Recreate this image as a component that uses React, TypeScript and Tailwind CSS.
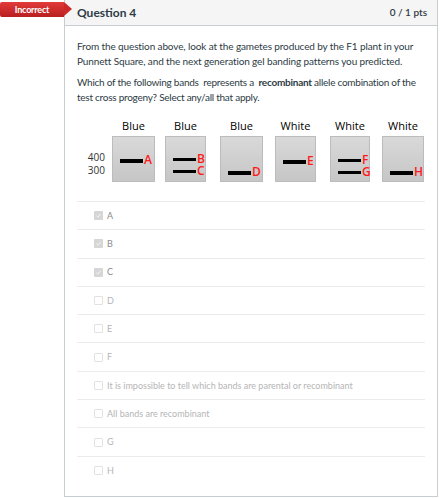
import React from "react";

const options = [
  { label: "A", checked: true },
  { label: "B", checked: true },
  { label: "C", checked: true },
  { label: "D", checked: false },
  { label: "E", checked: false },
  { label: "F", checked: false },
  { label: "It is impossible to tell which bands are parental or recombinant", checked: false },
  { label: "All bands are recombinant", checked: false },
  { label: "G", checked: false },
  { label: "H", checked: false },
];

type Band = { top: number; thick: boolean; letter: string };

const lanes: { name: string; ml: string; w: string; bands: Band[] }[] = [
  { name: "Blue", ml: "ml-0", w: "w-[43px]", bands: [{ top: 22, thick: true, letter: "A" }] },
  {
    name: "Blue",
    ml: "ml-[10px]",
    w: "w-[41px]",
    bands: [
      { top: 21, thick: false, letter: "B" },
      { top: 33, thick: false, letter: "C" },
    ],
  },
  { name: "Blue", ml: "ml-[14px]", w: "w-[43px]", bands: [{ top: 34, thick: true, letter: "D" }] },
  { name: "White", ml: "ml-[12px]", w: "w-[41px]", bands: [{ top: 23, thick: true, letter: "E" }] },
  {
    name: "White",
    ml: "ml-[14px]",
    w: "w-[40px]",
    bands: [
      { top: 22, thick: false, letter: "F" },
      { top: 34, thick: false, letter: "G" },
    ],
  },
  { name: "White", ml: "ml-[12px]", w: "w-[42px]", bands: [{ top: 34, thick: true, letter: "H" }] },
];

function GelFigure() {
  return (
    <div className="flex items-end mt-[14px] pl-[7px]" style={{ fontFamily: "'Open Sans', 'Liberation Sans', sans-serif" }}>
      <div className="flex flex-col items-end w-[21px] mr-[7px] mb-[5px] text-[10px] leading-[13px] text-[#333]">
        <span>400</span>
        <span>300</span>
      </div>
      {lanes.map((lane, i) => (
        <div key={i} className={`flex flex-col items-center ${lane.ml}`}>
          <span className="text-[11px] leading-[14px] text-black mb-[3px]">{lane.name}</span>
          <div className={`relative h-[46px] ${lane.w} bg-gradient-to-b from-[#d9d9d9] to-[#c6c6c6] border border-[#bcbcbc]`}>
            {lane.bands.map((b) => (
              <React.Fragment key={b.letter}>
                <div
                  className={`absolute left-[7px] w-[23px] bg-black ${b.thick ? "h-[4px]" : "h-[3px]"}`}
                  style={{ top: b.top }}
                />
                <span
                  className="absolute left-[31px] text-[12px] leading-[12px] text-[#ff1a1a] font-semibold"
                  style={{ top: b.top - 5 }}
                >
                  {b.letter}
                </span>
              </React.Fragment>
            ))}
          </div>
        </div>
      ))}
    </div>
  );
}

function Checkbox({ checked }: { checked: boolean }) {
  if (checked) {
    return (
      <span className="flex items-center justify-center w-[9px] h-[9px] rounded-[1px] bg-[#d6d6d6]">
        <svg viewBox="0 0 10 10" className="w-[7px] h-[7px]">
          <path d="M2 5.2 L4.2 7.3 L8 2.8" fill="none" stroke="#f5f5f5" strokeWidth="1.4" />
        </svg>
      </span>
    );
  }
  return <span className="block w-[9px] h-[9px] rounded-[1px] border border-[#e2e2e2] bg-white" />;
}

export default function App() {
  return (
    <div className="relative w-[441px] h-[498px] bg-white" style={{ fontFamily: "Lato, 'Open Sans', sans-serif" }}>
      <div className="absolute left-0 top-[2px] z-10 flex">
        <div className="h-[15px] w-[64px] bg-gradient-to-b from-[#e23b3b] to-[#b91f1f] rounded-l-[2px] flex items-center justify-center text-white text-[9px] font-bold tracking-[-0.2px]">
          Incorrect
        </div>
        <div className="w-0 h-0 border-y-[7.5px] border-y-transparent border-l-[8px] border-l-[#cc2a2a]" />
      </div>

      <div className="absolute left-[64px] top-0 w-[374px] h-[497px] border border-t-0 border-[#c7cdd1] flex flex-col">
        <div className="h-[26px] bg-[#f5f5f5] border-b border-[#c7cdd1] flex items-center justify-between pl-[12px] pr-[10px]">
          <span className="text-[12px] font-bold text-[#2d3b45]">Question 4</span>
          <span className="text-[10px] font-semibold text-[#2d3b45]">0 / 1 pts</span>
        </div>

        <div className="px-[12px] pt-[13px] text-[#2d3b45]">
          <p className="text-[10px] leading-[15px] tracking-[-0.12px]">
            From the question above, look at the gametes produced by the F1 plant in your Punnett Square, and the next
            generation gel banding patterns you predicted.
          </p>
          <p className="text-[10px] leading-[15px] mt-[6px] tracking-[-0.25px]">
            Which of the following bands&nbsp; represents a&nbsp; <strong>recombinant</strong> allele combination of the
            test cross progeny? Select any/all that apply.
          </p>

          <GelFigure />

          <div className="mt-[19px]">
            {options.map((o, i) => (
              <div key={i} className="h-[28.3px] flex items-center pl-[17px] gap-[4px] border-t border-[#ececec]">
                <Checkbox checked={o.checked} />
                <span className={`text-[9px] ${o.checked ? "text-[#8a8a8a]" : "text-[#b5b5b5]"}`}>{o.label}</span>
              </div>
            ))}
          </div>
        </div>
      </div>
    </div>
  );
}
